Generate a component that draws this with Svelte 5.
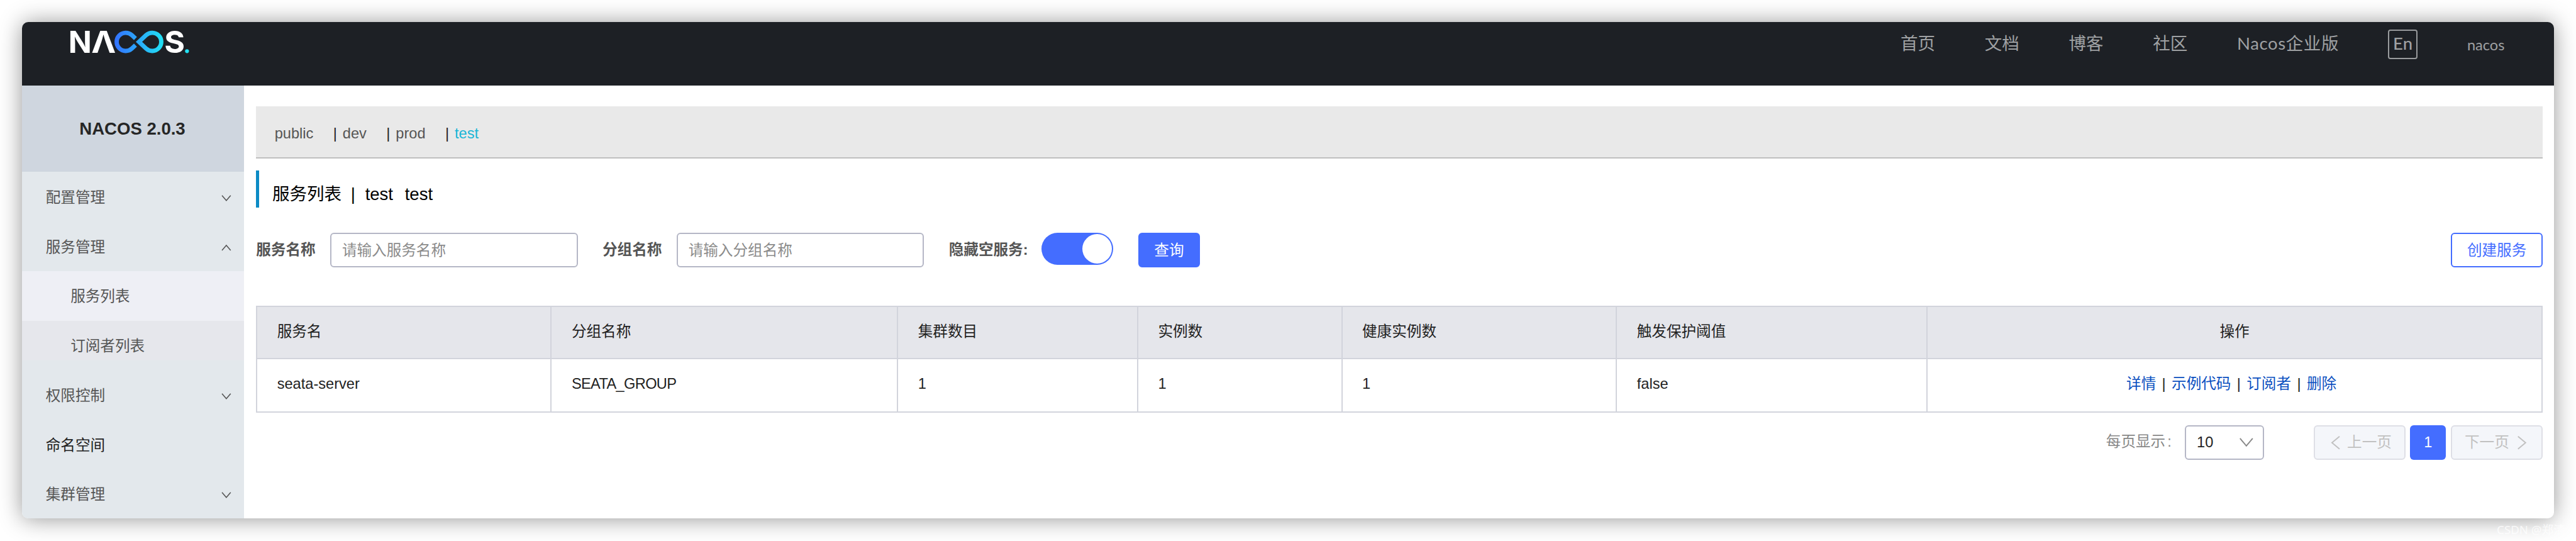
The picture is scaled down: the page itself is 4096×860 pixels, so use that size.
<script>
  const nav = ['首页', '文档', '博客', '社区', 'Nacos企业版'];
  const menu = [
    { label: '配置管理', icon: 'down' },
    { label: '服务管理', icon: 'up' },
    { label: '服务列表', kind: 'sub active' },
    { label: '订阅者列表', kind: 'sub' },
    { label: '权限控制', icon: 'down' },
    { label: '命名空间', kind: 'dark' },
    { label: '集群管理', icon: 'down' }
  ];
  const columns = ['服务名', '分组名称', '集群数目', '实例数', '健康实例数', '触发保护阈值'];
  const rows = [['seata-server', 'SEATA_GROUP', '1', '1', '1', 'false']];
  const actions = ['详情', '示例代码', '订阅者', '删除'];
</script>

<div class="page">
  <div class="window">
    <header>
      <svg class="logo" viewBox="0 0 660 180">
        <defs>
          <linearGradient id="loop" gradientUnits="userSpaceOnUse" x1="262" y1="0" x2="492" y2="0">
            <stop offset="0" stop-color="#3374ff" />
            <stop offset="1" stop-color="#21e1f3" />
          </linearGradient>
        </defs>
        <g class="mark">
          <text x="33" y="138" textLength="113" lengthAdjust="spacingAndGlyphs">N</text>
          <text x="144" y="138" textLength="119" lengthAdjust="spacingAndGlyphs">Λ</text>
          <text x="498" y="138" textLength="100" lengthAdjust="spacingAndGlyphs">S</text>
        </g>
        <g fill="none" stroke="url(#loop)" stroke-width="21">
          <path d="M358 68 L341 52 A44 44 0 1 0 341 116 L358 100" />
          <path d="M375 84 L409 52 A44 44 0 1 1 409 116 Z" />
        </g>
        <circle cx="608" cy="129" r="9.5" fill="#22e0f2" />
      </svg>
      <nav>
        {#each nav as item}<span>{item}</span>{/each}
      </nav>
      <span class="lang">En</span>
      <span class="user">nacos</span>
    </header>

    <div class="body">
      <aside>
        <div class="version">NACOS 2.0.3</div>
        {#each menu as m}
          <div class="item {m.kind ?? ''}">
            <span>{m.label}</span>
            {#if m.icon}
              <svg class="chev {m.icon}" viewBox="0 0 16 10"><path d="M1 0.8 L8 9 L15 0.8" /></svg>
            {/if}
          </div>
        {/each}
      </aside>

      <main>
        <div class="spaces">
          <span class="ns">public</span><i>|</i><span class="ns">dev</span><i>|</i><span class="ns">prod</span><i>|</i><span class="ns on">test</span>
        </div>
        <div class="title">
          <span>服务列表</span><span class="bar">|</span><span>test</span><span class="desc">test</span>
        </div>

        <div class="form">
          <b>服务名称</b>
          <div class="input">请输入服务名称</div>
          <b>分组名称</b>
          <div class="input">请输入分组名称</div>
          <b class="toggle-label">隐藏空服务:</b>
          <div class="switch"><div class="knob"></div></div>
          <div class="btn primary">查询</div>
          <div class="btn create">创建服务</div>
        </div>

        <div class="table">
          <div class="tr head">
            {#each columns as c}<div class="td">{c}</div>{/each}
            <div class="td ops">操作</div>
          </div>
          {#each rows as r}
            <div class="tr">
              {#each r as c, n}<div class="td" class:group={n === 1}>{c}</div>{/each}
              <div class="td ops links">
                {#each actions as a, n}{#if n}<i>|</i>{/if}<span>{a}</span>{/each}
              </div>
            </div>
          {/each}
        </div>

        <div class="pager">
          <span class="size">每页显示<span class="colon">:</span></span>
          <div class="select">
            <span>10</span>
            <svg viewBox="0 0 22 14"><path d="M0.8 0.8 L11 13 L21.2 0.8" /></svg>
          </div>
          <div class="step prev">
            <svg viewBox="0 0 14 22"><path d="M13.2 0.8 L1 11 L13.2 21.2" /></svg>
            <span>上一页</span>
          </div>
          <div class="num">1</div>
          <div class="step">
            <span>下一页</span>
            <svg viewBox="0 0 14 22"><path d="M0.8 0.8 L13 11 L0.8 21.2" /></svg>
          </div>
        </div>
      </main>
    </div>
  </div>
  <div class="watermark">CSDN @郑清</div>
</div>

<style>
  :global(html) { font-size: 98.367px; }
  :global(body) { margin: 0; background: #fff; }
  .page, .page * { box-sizing: border-box; }
  .page {
    position: relative;
    width: 4096px;
    height: 860px;
    overflow: hidden;
    padding: 0.36rem;
    background: #fff;
    font-family: "Liberation Sans", "Noto Sans CJK SC", sans-serif;
    font-size: 0.24rem;
    line-height: 0.4rem;
    color: #222;
    white-space: nowrap;
  }
  i { font-style: normal; }
  svg { display: block; overflow: visible; }
  .window {
    width: 40.92rem;
    height: 8.02rem;
    border-radius: 0.1rem;
    background: #fff;
    box-shadow: 0 1px 36px rgba(0, 0, 0, 0.42);
  }
  header {
    display: flex;
    align-items: flex-start;
    height: 1.02rem;
    padding-left: 0.64rem;
    background: #1d2025;
    border-radius: 0.1rem 0.1rem 0 0;
    font-family: Lato, "Noto Sans CJK SC", sans-serif;
    color: #9fa1a3;
  }
  .logo { width: 2.2rem; height: 0.6rem; margin-top: 0.04rem; }
  .mark {
    fill: #fff;
    font-family: Inter, sans-serif;
    font-size: 148.5px;
    font-weight: 700;
  }
  nav {
    display: flex;
    gap: 0.8rem;
    margin: 0.14rem 0 0 auto;
    font-size: 0.28rem;
  }
  nav span:last-child { width: 1.64rem; letter-spacing: 0.006rem; }
  .lang {
    width: 0.48rem;
    height: 0.48rem;
    margin: 0.12rem 0 0 0.8rem;
    border: 2px solid #999b9d;
    border-radius: 0.04rem;
    font-size: 0.28rem;
    font-weight: 500;
    line-height: 0.41rem;
    text-align: center;
  }
  .user { width: 0.62rem; margin: 0.165rem 0.78rem 0 0.8rem; }
  .body { display: flex; height: 7rem; }
  aside {
    width: 3.58rem;
    background: #e3e8ec;
    border-radius: 0 0 0 0.1rem;
    color: #555;
  }
  .version {
    height: 1.4rem;
    background: #cfd6df;
    color: #262626;
    font-size: 0.28rem;
    font-weight: 700;
    line-height: 1.4rem;
    text-align: center;
    padding-right: 0.02rem;
  }
  .item {
    display: flex;
    align-items: center;
    justify-content: space-between;
    height: 0.8rem;
    padding: 0.04rem 0.2rem 0 0.38rem;
  }
  .sub {
    padding-left: 0.78rem;
    background: linear-gradient(#e6e7ec 0.64rem, #e3e8ec 0.64rem);
  }
  .active { background: #eeeff5; }
  .dark { color: #222; }
  .chev { width: 0.16rem; height: 0.1rem; fill: none; stroke: #555; stroke-width: 1.6; }
  .up { transform: rotate(180deg); }
  main { flex: 1; padding: 0.34rem 0.18rem 0 0.2rem; }
  .spaces {
    display: flex;
    height: 0.84rem;
    padding: 0.24rem 0 0 0.3rem;
    background: #e9e9e9;
    border-bottom: 2px solid #bfbfbf;
    color: #222;
  }
  .ns { margin-right: 0.32rem; color: #555; }
  .spaces i { margin-right: 0.09rem; }
  .ns.on { color: #19b5d6; }
  .title {
    display: flex;
    height: 0.6rem;
    margin-top: 0.2rem;
    padding: 0.18rem 0 0 0.21rem;
    border-left: 0.06rem solid #0c8bc5;
    font-size: 0.28rem;
    color: #000;
  }
  .bar { margin: 0 0.16rem 0 0.15rem; }
  .desc { margin-left: 0.19rem; }
  .form { display: flex; height: 0.56rem; margin-top: 0.4rem; line-height: 0.56rem; }
  .form b { margin-right: 0.24rem; color: #555; }
  .form .toggle-label { width: 1.28rem; margin-right: 0.22rem; }
  .input {
    width: 4rem;
    margin-right: 0.4rem;
    padding-left: 0.17rem;
    border: 2px solid #b5b7c6;
    border-radius: 0.06rem;
    line-height: 0.54rem;
    color: #8b8b8b;
  }
  .switch {
    display: flex;
    justify-content: flex-end;
    width: 1.16rem;
    height: 0.52rem;
    margin: 0 0.4rem 0 0;
    padding: 0.02rem;
    border-radius: 0.26rem;
    background: #446dff;
  }
  .knob { width: 0.48rem; height: 0.48rem; border-radius: 50%; background: #fff; }
  .btn { border: 2px solid #446dff; border-radius: 0.06rem; line-height: 0.53rem; text-align: center; }
  .primary { width: 1rem; background: #446dff; color: #fff; }
  .create { width: 1.48rem; margin-left: auto; color: #446dff; }
  .table { margin-top: 0.62rem; border: 2px solid #d2d4dc; }
  .tr { display: grid; grid-template-columns: 4.76rem 5.6rem 3.88rem 3.3rem 4.44rem 5.02rem 1fr; height: 0.85rem; }
  .head { height: 0.84rem; background: #e5e6eb; border-bottom: 2px solid #d2d4dc; }
  .td { padding-left: 0.32rem; border-right: 2px solid #d2d4dc; line-height: 0.81rem; }
  .group { letter-spacing: -0.0065rem; }
  .ops { padding: 0; border: 0; text-align: center; }
  .links { display: flex; justify-content: center; padding-right: 0.1rem; color: #0a4fc0; }
  .links i { margin: 0 0.095rem; color: #222; }
  .pager { display: flex; justify-content: flex-end; height: 0.56rem; margin-top: 0.2rem; line-height: 0.54rem; }
  .size { margin-right: 0.22rem; color: #888; }
  .colon { margin-left: 0.03rem; }
  .select, .step {
    display: flex;
    align-items: center;
    justify-content: space-between;
    border: 2px solid #b5b7c6;
    border-radius: 0.06rem;
  }
  .select { width: 1.28rem; margin-right: 0.8rem; padding: 0 0.16rem 0 0.17rem; }
  .select svg { width: 0.22rem; height: 0.14rem; fill: none; stroke: #888; stroke-width: 2; }
  .step { width: 1.48rem; padding: 0 0.2rem; border-color: #dedfe6; background: #f4f6fa; color: #c1c1c1; }
  .prev { padding: 0 0.2rem 0 0.26rem; }
  .step:last-child { padding-right: 0.25rem; }
  .step svg { width: 0.14rem; height: 0.22rem; fill: none; stroke: #c1c1c1; stroke-width: 2; }
  .num { width: 0.58rem; margin: 0 0.08rem; border-radius: 0.06rem; background: #446dff; color: #fff; line-height: 0.56rem; text-align: center; }
  .watermark {
    position: absolute;
    left: 40.36rem;
    top: 8.36rem;
    font-family: "Noto Sans", "Noto Sans CJK SC", sans-serif;
    font-size: 0.19rem;
    color: rgba(255, 255, 255, 0.75);
  }
</style>
